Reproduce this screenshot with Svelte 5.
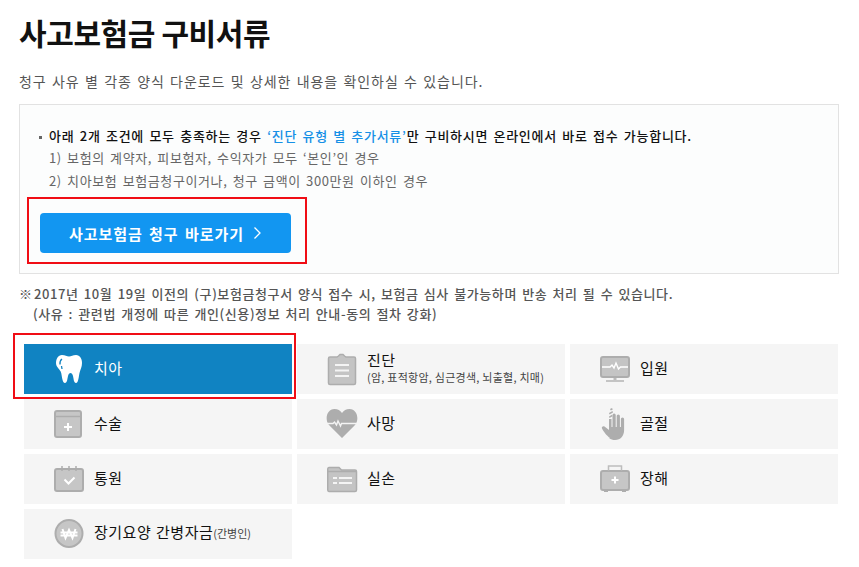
<script>
  const tiles = [
    { id: 'tooth', label: '치아', active: true },
    { id: 'chart', label: '진단', sub: '(암, 표적항암, 심근경색, 뇌출혈, 치매)' },
    { id: 'monitor', label: '입원' },
    { id: 'surgery', label: '수술' },
    { id: 'heart', label: '사망' },
    { id: 'hand', label: '골절' },
    { id: 'calendar', label: '통원' },
    { id: 'folder', label: '실손' },
    { id: 'kit', label: '장해' },
    { id: 'won', label: '장기요양 간병자금', small: '(간병인)' }
  ];
</script>

<div class="page">
  <h1>사고보험금 구비서류</h1>
  <p class="lead">청구 사유 별 각종 양식 다운로드 및 상세한 내용을 확인하실 수 있습니다.</p>

  <div class="notice">
    <p class="cond"><span class="dot"></span>아래 2개 조건에 모두 충족하는 경우 <em>‘진단 유형 별 추가서류’</em>만 구비하시면 온라인에서 바로 접수 가능합니다.</p>
    <p class="item">1) 보험의 계약자, 피보험자, 수익자가 모두 ‘본인’인 경우</p>
    <p class="item">2) 치아보험 보험금청구이거나, 청구 금액이 300만원 이하인 경우</p>
    <div class="btn-wrap">
      <button class="go">사고보험금 청구 바로가기
        <svg width="9" height="14" viewBox="0 0 9 14"><path d="M1.500 1.500 7 7l-5.500 5.500" fill="none" stroke="#fff" stroke-width="1.300"/></svg>
      </button>
      <span class="mark btn-mark"></span>
    </div>
  </div>

  <p class="warn"><span class="ref">※</span>2017년 10월 19일 이전의 (구)보험금청구서 양식 접수 시, 보험금 심사 불가능하며 반송 처리 될 수 있습니다.<br><span class="warn2">(사유 : 관련법 개정에 따른 개인(신용)정보 처리 안내-동의 절차 강화)</span></p>

  <div class="grid">
    {#each tiles as t}
      <div class="tile" class:active={t.active}>
        <span class="icon">
          <svg width="36" height="36" viewBox="0 0 36 36">
            {#if t.id === 'tooth'}
              <path d="M10 4c3 0 5 1.500 7 1.500S21 4 24 4c4 0 6 4 6 8 0 4-1.500 6-2.500 10-.8 3.500-1 10-3.500 10-2.200 0-2.300-4-3-7-.4-1.800-1.500-3-2.500-3s-2.100 1.200-2.500 3c-.7 3-.8 7-3 7-2.700 0-3-6.500-3.800-10C8.300 18 4 16.500 4 12c0-4 2-8 6-8z" fill="#fff"/>
              <path d="M10 8c-1.500 1-2.300 3-2 5.500M9.500 15l.5 3" fill="none" stroke="#1083c2" stroke-width="1.300"/>
            {:else if t.id === 'chart'}
              <path d="M5 6h7l1.500-1 1.500-1.500h3L19.500 5l1.500 1h8a1.500 1.500 0 0 1 1.500 1.500v24.500a1.500 1.500 0 0 1-1.500 1.500H5A1.500 1.500 0 0 1 3.500 32V7.500A1.500 1.500 0 0 1 5 6z" fill="#c4c4c4" stroke="#adadad" stroke-width="1.500"/>
              <path d="M10 14h14M10 19.500h14M10 25h14" stroke="#f4f4f4" stroke-width="1.800"/>
            {:else if t.id === 'monitor'}
              <rect x="3" y="6" width="28" height="20" rx="2" fill="#c4c4c4" stroke="#adadad" stroke-width="2"/>
              <path d="M4 16h8l2-2 2 3 2-5 2.500 6 2-2H30" fill="none" stroke="#fff" stroke-width="1.400"/>
              <path d="M15.500 27h3v2h-3z" fill="#bbb"/><path d="M8 29h18v2H8z" fill="#c4c4c4"/>
            {:else if t.id === 'surgery'}
              <rect x="3" y="5" width="26" height="26" rx="2" fill="#c6c6c6" stroke="#adadad" stroke-width="2"/>
              <path d="M3 10.500h26" stroke="#adadad" stroke-width="1.500"/>
              <path d="M16 17v8M12 21h8" stroke="#fff" stroke-width="2"/>
            {:else if t.id === 'heart'}
              <path d="M17 32 4 19C-.500 14 1.500 3 9.500 3c3.500 0 5.500 1.500 7.500 4 2-2.500 4-4 7.500-4 8 0 10 11 5.500 16z" fill="#adadad"/>
              <path d="M2 17.500h6l1.500-1.500 2 3 1.500-4 2.500 5 1-2.500H32" fill="none" stroke="#f4f4f4" stroke-width="1.400"/>
            {:else if t.id === 'hand'}
              <path d="M12 32c-3-2-6.500-6.500-8-9.500-.7-1.500 1-3 2.500-2l4.500 3.500V13h2.500v8h1V9a1.600 1.600 0 0 1 3.200 0v12h1V10a1.600 1.600 0 0 1 3.200 0v11h1V13a1.600 1.600 0 0 1 3.200 0v11c0 6-3.500 10-9 10-2.500 0-4-.6-6.100-2z" fill="#adadad"/>
              <path d="M12 3l2-1 .8 1.500-2 1zM11 7l3.500-2 .5 1.500-3.500 2zM11 10.500l3-1.800.5 1.500-3 1.800z" fill="#adadad"/>
            {:else if t.id === 'calendar'}
              <rect x="3" y="8" width="28" height="22" rx="2" fill="#c6c6c6" stroke="#adadad" stroke-width="2"/>
              <path d="M10 5v5M17 5v5M24 5v5" stroke="#adadad" stroke-width="1.500"/>
              <path d="M12.500 18.500l4 4 6-6" fill="none" stroke="#fff" stroke-width="2"/>
            {:else if t.id === 'folder'}
              <path d="M4 6.500h10l2.500 2.500H30a1.500 1.500 0 0 1 1.500 1.500V29a1.500 1.500 0 0 1-1.500 1.500H4A1.500 1.500 0 0 1 2.750 29V8A1.500 1.500 0 0 1 4 6.500z" fill="#c4c4c4" stroke="#adadad" stroke-width="1.500"/>
              <path d="M3 10.500h28" stroke="#adadad" stroke-width="1.500"/>
              <path d="M8 17h4M14 17h13M8 22h4M14 22h13" stroke="#f4f4f4" stroke-width="1.800"/>
            {:else if t.id === 'kit'}
              <rect x="3" y="10" width="28" height="19" rx="2" fill="#c6c6c6" stroke="#adadad" stroke-width="2"/>
              <path d="M10.500 9.500V5h13v4.500" fill="none" stroke="#bdbdbd" stroke-width="1.500"/>
              <path d="M17 15.500v7M13.500 19h7" stroke="#fff" stroke-width="2"/>
              <path d="M6 29h4v2H6zM24 29h4v2h-4z" fill="#adadad"/>
            {:else if t.id === 'won'}
              <circle cx="17" cy="17.500" r="13.500" fill="#c6c6c6" stroke="#adadad" stroke-width="2"/>
              <path d="M10.500 13l3 9 3.500-8 3.500 8 3-9M8.500 16.500h17M8.500 19.500h17" fill="none" stroke="#fff" stroke-width="2"/>
            {/if}
          </svg>
        </span>
        <span class="text">
          <span class="label">{t.label}{#if t.small}<small>{t.small}</small>{/if}</span>
          {#if t.sub}<span class="sub">{t.sub}</span>{/if}
        </span>
        {#if t.active}<span class="mark tile-mark"></span>{/if}
      </div>
    {/each}
  </div>
</div>

<style>
  :global(body) {
    margin: 0;
    background: #fff;
    font-family: "Noto Sans CJK KR", "Liberation Sans", sans-serif;
    overflow: hidden;
  }
  .page {
    padding: 12px 20px 0 19px;
    color: #111;
  }
  h1 {
    margin: 0;
    font-size: 30px;
    line-height: 40px;
    font-weight: 700;
    letter-spacing: -0.4px;
    color: #111;
  }
  .lead {
    margin: 19px 0 0;
    font-size: 14px;
    line-height: 20px;
    letter-spacing: 0.93px;
    word-spacing: 1.300px;
    color: #555;
  }
  .notice {
    margin-top: 13px;
    height: 170px;
    box-sizing: border-box;
    border: 1px solid #e2e2e2;
    background: #fcfdfd;
    padding: 21px 0 0 19px;
    font-size: 13px;
    letter-spacing: 0.6px;
    word-spacing: 1.800px;
  }
  .notice p { margin: 0; }
  .cond {
    line-height: 20px;
    font-weight: 500;
    letter-spacing: 0.71px;
    color: #111;
  }
  .cond em {
    font-style: normal;
    font-weight: 500;
    color: #1690e6;
  }
  .dot {
    display: inline-block;
    vertical-align: middle;
    width: 3px;
    height: 3px;
    background: #666;
    margin-right: 7px;
  }
  .item {
    padding-left: 10px;
    line-height: 23px;
    color: #666;
  }
  .btn-wrap {
    position: relative;
    width: 251px;
    margin-top: 21px;
    margin-left: 1px;
  }
  .go {
    display: flex;
    align-items: center;
    justify-content: center;
    gap: 9px;
    width: 251px;
    height: 40px;
    border: 0;
    border-radius: 4px;
    background: #1296f1;
    color: #fff;
    font-family: inherit;
    font-size: 15px;
    font-weight: 700;
    letter-spacing: 0.95px;
    word-spacing: 2px;
    padding: 0;
  }
  .mark {
    position: absolute;
    box-sizing: border-box;
    border: 2px solid #f00d15;
    pointer-events: none;
  }
  .btn-mark { left: -13px; top: -16px; width: 280px; height: 67px; }
  .warn {
    margin: 10px 0 0;
    font-size: 13px;
    line-height: 19.500px;
    letter-spacing: 0.6px;
    word-spacing: 1.700px;
    font-weight: 500;
    color: #555;
  }
  .ref { letter-spacing: 0; margin-right: 2px; }
  .warn2 { padding-left: 14px; }
  .grid {
    display: grid;
    grid-template-columns: repeat(3, 268px);
    grid-auto-rows: 50px;
    gap: 5px;
    margin: 21px 0 0 5px;
  }
  .tile {
    position: relative;
    display: flex;
    align-items: center;
    background: #f5f5f5;
  }
  .tile.active {
    background: #1083c2;
    color: #fff;
  }
  .icon {
    display: flex;
    margin-left: 28px;
    width: 36px;
    height: 36px;
  }
  .text {
    display: flex;
    flex-direction: column;
    margin-left: 6px;
    padding-bottom: 3px;
  }
  .label {
    font-size: 15px;
    line-height: 20px;
    font-weight: 400;
    letter-spacing: 0.5px;
    word-spacing: 1px;
  }
  small {
    font-size: 11px;
    letter-spacing: 0;
    color: #444;
  }
  .sub {
    font-size: 11px;
    line-height: 15px;
    letter-spacing: 0.25px;
    color: #444;
  }
  .tile-mark { left: -11px; top: -11px; width: 283px; height: 66px; }
</style>
